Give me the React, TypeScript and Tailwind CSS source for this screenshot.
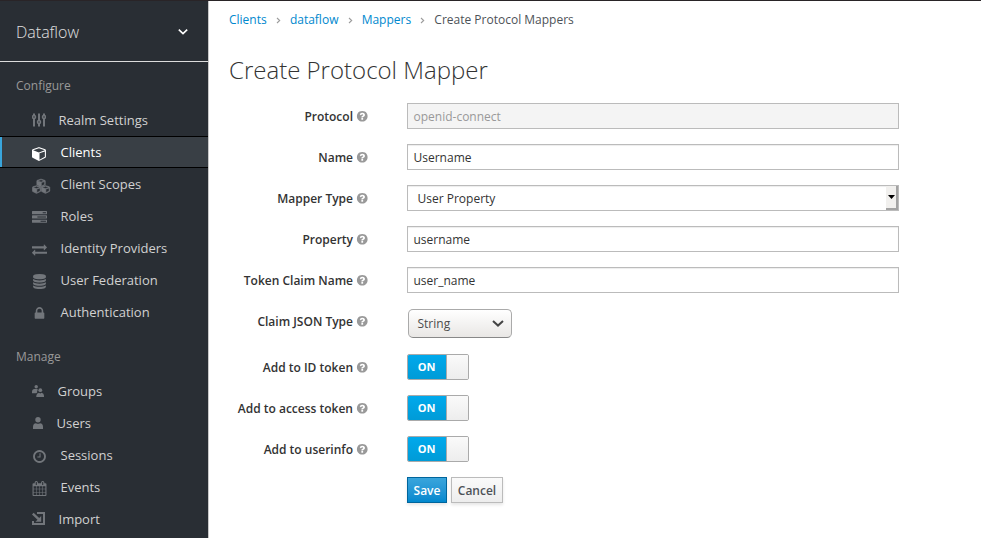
import React from "react";

const CUBE =
  "M896 1629l640-349v-636l-640 233v752zm-64-865l698-254-698-254-698 254zm832-252v768q0 35-18 65t-49 47l-704 384q-28 16-61 16t-61-16l-704-384q-31-17-49-47t-18-65v-768q0-40 23-73t61-47l704-256q22-8 44-8t44 8l704 256q38 14 61 47t23 73z";
const TASKS =
  "M1024 1408h640v-128h-640v128zm-384-512h1024v-128h-1024v128zm640-512h384v-128h-384v128zm512 832v256q0 26-19 45t-45 19h-1664q-26 0-45-19t-19-45v-256q0-26 19-45t45-19h1664q26 0 45 19t19 45zm0-512v256q0 26-19 45t-45 19h-1664q-26 0-45-19t-19-45v-256q0-26 19-45t45-19h1664q26 0 45 19t19 45zm0-512v256q0 26-19 45t-45 19h-1664q-26 0-45-19t-19-45v-256q0-26 19-45t45-19h1664q26 0 45 19t19 45z";
const EXCHANGE =
  "M1792 1184v192q0 13-9.500 22.500t-22.500 9.500h-1376v192q0 13-9.500 22.500t-22.500 9.500q-12 0-24-10l-319-320q-9-9-9-22 0-14 9-23l320-320q9-9 23-9 13 0 22.500 9.500t9.500 22.500v192h1376q13 0 22.500 9.500t9.500 22.500zm0-544q0 14-9 23l-320 320q-9 9-23 9-13 0-22.500-9.500t-9.500-22.500v-192h-1376q-13 0-22.500-9.500t-9.500-22.500v-192q0-13 9.500-22.500t22.500-9.500h1376v-192q0-14 9-23t23-9q12 0 24 10l319 319q9 9 9 23z";
const DATABASE =
  "M896 768q237 0 443-43t325-127v170q0 69-103 128t-280 93.500-385 34.500-385-34.500-280-93.500-103-128v-170q119 84 325 127t443 43zm0 768q237 0 443-43t325-127v170q0 69-103 128t-280 93.500-385 34.500-385-34.500-280-93.500-103-128v-170q119 84 325 127t443 43zm0-384q237 0 443-43t325-127v170q0 69-103 128t-280 93.500-385 34.500-385-34.500-280-93.500-103-128v-170q119 84 325 127t443 43zm0-1152q208 0 385 34.500t280 93.500 103 128v128q0 69-103 128t-280 93.500-385 34.500-385-34.500-280-93.500-103-128v-128q0-69 103-128t280-93.500 385-34.500z";
const LOCK =
  "M640 768h512v-192q0-106-75-181t-181-75-181 75-75 181v192zm832 96v576q0 40-28 68t-68 28h-960q-40 0-68-28t-28-68v-576q0-40 28-68t68-28h32v-192q0-184 132-316t316-132 316 132 132 316v192h32q40 0 68 28t28 68z";
const CLOCK =
  "M1024 544v448q0 14-9 23t-23 9h-320q-14 0-23-9t-9-23v-64q0-14 9-23t23-9h224v-352q0-14 9-23t23-9h64q14 0 23 9t9 23zm416 352q0-148-73-273t-198-198-273-73-273 73-198 198-73 273 73 273 198 198 273 73 273-73 198-198 73-273zm224 0q0 209-103 385.500t-279.500 279.500-385.500 103-385.500-103-279.500-279.500-103-385.500 103-385.500 279.500-279.500 385.500-103 385.500 103 279.500 279.500 103 385.500z";
const CALENDAR =
  "M192 1664h288v-288h-288v288zm352 0h320v-288h-320v288zm-352-352h288v-320h-288v320zm352 0h320v-320h-320v320zm-352-384h288v-288h-288v288zm736 736h320v-288h-320v288zm-384-736h320v-288h-320v288zm768 736h288v-288h-288v288zm-384-352h320v-320h-320v320zm-352-864v-288q0-13-9.500-22.500t-22.500-9.500h-64q-13 0-22.500 9.500t-9.500 22.500v288q0 13 9.500 22.500t22.500 9.500h64q13 0 22.500-9.500t9.500-22.500zm736 864h288v-320h-288v320zm-384-384h320v-288h-320v288zm384 0h288v-288h-288v288zm32-480v-288q0-13-9.500-22.500t-22.500-9.500h-64q-13 0-22.500 9.500t-9.500 22.500v288q0 13 9.500 22.500t22.500 9.500h64q13 0 22.500-9.500t9.500-22.500zm384-64v1280q0 52-38 90t-90 38h-1408q-52 0-90-38t-38-90v-1280q0-52 38-90t90-38h128v-96q0-66 47-113t113-47h64q66 0 113 47t47 113v96h384v-96q0-66 47-113t113-47h64q66 0 113 47t47 113v96h128q52 0 90 38t38 90z";
const QUESTION =
  "M1024 1376v-192q0-14-9-23t-23-9h-192q-14 0-23 9t-9 23v192q0 14 9 23t23 9h192q14 0 23-9t9-23zm256-672q0-88-55.500-163t-138.500-116-170-41q-243 0-371 213-15 24 8 42l132 100q7 6 19 6 16 0 25-12 53-68 86-92 34-24 86-24 48 0 85.500 26t37.500 59q0 38-20 61t-68 45q-63 28-115.500 86.500t-52.500 125.500v36q0 14 9 23t23 9h192q14 0 23-9t9-23q0-19 21.500-49.500t54.500-49.500q32-18 49-28.500t46-35 44.500-48 28-60.500 12.500-81zm384 192q0 209-103 385.500t-279.500 279.500-385.500 103-385.500-103-279.500-279.500-103-385.500 103-385.500 279.500-279.500 385.500-103 385.500 103 279.500 279.500 103 385.500z";

function Glyph({ d, className = "size-[15px]" }: { d: string; className?: string }) {
  return (
    <svg viewBox="0 0 1792 1792" fill="currentColor" className={className}>
      <path d={d} />
    </svg>
  );
}

function SlidersIcon() {
  return (
    <svg viewBox="0 0 14 14" className="size-3.5" fill="none" stroke="currentColor">
      <g strokeWidth="2">
        <path d="M2 0.500V2.200M2 5.700V13.500M7 0.500V7.200M7 10.700V13.500M12 0.500V2.200M12 5.700V13.500" />
      </g>
      <g strokeWidth="1.6">
        <circle cx="2" cy="4" r="1.500" />
        <circle cx="7" cy="9" r="1.500" />
        <circle cx="12" cy="4" r="1.500" />
      </g>
    </svg>
  );
}

function CubesIcon() {
  return (
    <svg viewBox="0 0 19 16" className="h-4 w-[19px]" fill="currentColor" stroke="currentColor">
      <g transform="translate(4.800 0.500) scale(0.00510 0.0047)" strokeWidth="110"><path d={CUBE} /></g>
      <g transform="translate(0.300 7) scale(0.00510 0.0047)" strokeWidth="110"><path d={CUBE} /></g>
      <g transform="translate(9.300 7) scale(0.00510 0.0047)" strokeWidth="110"><path d={CUBE} /></g>
    </svg>
  );
}

function GroupIcon() {
  return (
    <svg viewBox="0 0 12 12" className="size-3" fill="currentColor">
      <circle cx="4.200" cy="1.700" r="1.700" />
      <path d="M0 8.200V7Q0 4 2.500 4H4.500Q5.500 4 6 4.700Q4.600 5.800 5.200 7.600L4.300 8.200Z" />
      <circle cx="8.300" cy="5.200" r="1.900" />
      <path d="M4.300 12V10.800Q4.500 8 7 7.700L8.300 8.500L9.600 7.700Q12 8 12 10.800V12Z" />
    </svg>
  );
}

function UserIcon() {
  return (
    <svg viewBox="0 0 10 12" className="h-3 w-2.5" fill="currentColor">
      <circle cx="5" cy="2.700" r="2.700" />
      <path d="M0 12V9.800Q0 6.500 3 6.200Q5 7.300 7 6.200Q10 6.500 10 9.800V12Z" />
    </svg>
  );
}

function ImportIcon() {
  return (
    <svg viewBox="0 0 13 13" className="size-[13px]" fill="currentColor">
      <path d="M5 0H13V13H0V9H2V11H11V2H5Z" />
      <path d="M1.600 0.800L7.200 6L9.200 4V9.700H3.400L5.500 7.700L0 2.400Z" />
    </svg>
  );
}

type Item = { label: string; icon: React.ReactNode; slot: string; active?: boolean };

const configure: Item[] = [
  { label: "Realm Settings", icon: <SlidersIcon />, slot: "w-[26.5px] pb-px" },
  { label: "Clients", icon: <Glyph d={CUBE} />, slot: "w-[28.5px] pt-[3px]", active: true },
  { label: "Client Scopes", icon: <CubesIcon />, slot: "w-[28.5px] pt-[3px]" },
  { label: "Roles", icon: <Glyph d={TASKS} />, slot: "w-[28.5px] pt-[3px]" },
  { label: "Identity Providers", icon: <Glyph d={EXCHANGE} />, slot: "w-[28.5px] pt-[3px]" },
  { label: "User Federation", icon: <Glyph d={DATABASE} />, slot: "w-[28.5px] pt-[3px]" },
  { label: "Authentication", icon: <Glyph d={LOCK} />, slot: "w-[28.5px] pt-[3px]" },
];

const manage: Item[] = [
  { label: "Groups", icon: <GroupIcon />, slot: "w-[25.500px]" },
  { label: "Users", icon: <UserIcon />, slot: "w-[24.500px] pl-px" },
  { label: "Sessions", icon: <Glyph d={CLOCK} />, slot: "w-[28.5px] pt-[3px]" },
  { label: "Events", icon: <Glyph d={CALENDAR} />, slot: "w-[28.5px] pt-[3px]" },
  { label: "Import", icon: <ImportIcon />, slot: "w-[26.5px] pb-px" },
];

function Nav({ items }: { items: Item[] }) {
  return (
    <ul>
      {items.map((it) => (
        <li
          key={it.label}
          className={
            it.active
              ? "flex h-8 items-center border-y border-y-black bg-[#393f45] text-white shadow-[inset_2px_0_0_#39a5dc]"
              : "flex h-8 items-center text-[#d1d1d1]"
          }
        >
          <span className={`ml-8 flex shrink-0 items-center ${it.slot} ${it.active ? "text-white" : "text-[#72767b]"}`}>
            {it.icon}
          </span>
          <span className="text-[13px] leading-5">{it.label}</span>
        </li>
      ))}
    </ul>
  );
}

function Row({ label, children, className = "h-[26px]" }: { label: string; children: React.ReactNode; className?: string }) {
  return (
    <div className={`flex items-start ${className}`}>
      <label className="flex h-[28px] w-[138px] shrink-0 items-center justify-end gap-[2.5px] text-xs font-semibold text-[#333]">
        <span className="whitespace-nowrap">{label}</span>
        <Glyph d={QUESTION} className="-mr-px mb-px size-[12.5px] text-[#999]" />
      </label>
      <div className="ml-10 flex">{children}</div>
    </div>
  );
}

const field =
  "flex h-[26px] w-[492px] items-center border border-[#bbb] px-[5.5px] pt-0.5 text-xs text-[#333] shadow-[inset_0_1px_1px_rgba(0,0,0,0.075)]";

function Toggle() {
  return (
    <div className="flex h-[26px] w-[62px] overflow-hidden rounded-[2px] border border-[#aaa]">
      <div className="flex w-[38px] items-center justify-center bg-linear-to-b from-[#00a9ec] to-[#009bd7] pr-px text-[11px] font-bold text-white">
        ON
      </div>
      <div className="flex-1 border-l border-[#aaa] bg-linear-to-b from-[#fafafa] to-[#ededed]" />
    </div>
  );
}

function Sep() {
  return (
    <svg viewBox="0 0 5 7" className="mr-[9px] ml-[9.200px] mt-px h-[7px] w-[5px]" fill="none" stroke="#9c9c9c" strokeWidth="1.100">
      <path d="M1 1L3.700 3.500L1 6" />
    </svg>
  );
}

export default function App() {
  return (
    <div className="flex h-[538px] w-[981px] overflow-hidden border-t border-[#292427] bg-white font-['Open_Sans','Noto_Sans',sans-serif]">
      <aside className="w-[209px] shrink-0 border-r border-[#c8c8c8] bg-[#292e34]">
        <div className="flex h-[61px] items-center justify-between border-b border-[#dcdcdc] pr-5 pl-4 text-[#e0e0e0]">
          <span className="pt-0.5 text-base font-light">Dataflow</span>
          <svg viewBox="0 0 10 6" className="mt-px h-1.5 w-2.5" fill="none" stroke="white" strokeWidth="1.6">
            <path d="M0.800 0.700L5 4.700L9.200 0.700" />
          </svg>
        </div>
        <h2 className="mt-3.5 mb-2 pl-4 text-xs leading-5 text-[#999]">Configure</h2>
        <Nav items={configure} />
        <h2 className="mt-[19px] mb-2 pl-4 text-xs leading-5 text-[#999]">Manage</h2>
        <Nav items={manage} />
      </aside>
      <main className="flex-1 pl-5">
        <nav className="flex h-[37px] items-center text-xs text-[#4d5258]">
          <span className="text-[#0088ce]">Clients</span>
          <Sep />
          <span className="text-[#0088ce]">dataflow</span>
          <Sep />
          <span className="text-[#0088ce]">Mappers</span>
          <Sep />
          <span>Create Protocol Mappers</span>
        </nav>
        <h1 className="mt-[15px] mb-[17px] text-2xl leading-[33px] font-light text-[#333]">Create Protocol Mapper</h1>
        <form className="flex flex-col gap-[15px]">
          <Row label="Protocol">
            <div className="flex h-[26px] w-[492px] items-center border border-[#bbb] bg-[#f4f4f4] px-[5.5px] pt-0.5 text-xs text-[#999]">openid-connect</div>
          </Row>
          <Row label="Name">
            <div className={field}>Username</div>
          </Row>
          <Row label="Mapper Type">
            <div className="flex h-[26px] w-[492px] items-center justify-between border border-[#bbb] pl-[9.500px] text-xs text-[#333] shadow-[inset_0_1px_1px_rgba(0,0,0,0.075)]">
              <span className="pt-0.5">User Property</span>
              <span className="flex h-6 w-3 items-center justify-center border-r-2 border-b-2 border-[#a3a3a3] bg-[#f1f0ee] pl-px">
                <svg viewBox="0 0 7 4" className="h-1 w-[7px] shrink-0"><path d="M0 0H7L3.500 4Z" /></svg>
              </span>
            </div>
          </Row>
          <Row label="Property">
            <div className={field}>username</div>
          </Row>
          <Row label="Token Claim Name">
            <div className={field}>user_name</div>
          </Row>
          <Row label="Claim JSON Type" className="h-[31px]">
            <div className="mt-px ml-px flex h-[29px] w-[104px] items-center justify-between rounded-[5px] border border-[#aaa] border-b-[#888] bg-linear-to-b from-white to-[#e9e7e5] pr-[7px] pl-[8.500px] text-xs text-[#4c4c4c]">
              <span>String</span>
              <svg viewBox="0 0 12 7" className="h-[7px] w-3" fill="none" stroke="#444" strokeWidth="2">
                <path d="M1 1L6 5.600L11 1" />
              </svg>
            </div>
          </Row>
          <Row label="Add to ID token"><Toggle /></Row>
          <Row label="Add to access token"><Toggle /></Row>
          <Row label="Add to userinfo"><Toggle /></Row>
          <div className="flex gap-1 pl-[178px] text-xs font-semibold">
            <button type="button" className="h-[26px] w-10 border border-[#00659c] bg-linear-to-b from-[#39a5dc] to-[#0088ce] pt-0.5 text-white shadow-[0_2px_3px_rgba(3,3,3,0.1)]">Save</button>
            <button type="button" className="h-[26px] w-[52px] border border-[#bbb] bg-linear-to-b from-[#fafafa] to-[#ededed] pt-0.5 text-[#4d5258] shadow-[0_2px_3px_rgba(3,3,3,0.1)]">Cancel</button>
          </div>
        </form>
      </main>
    </div>
  );
}
